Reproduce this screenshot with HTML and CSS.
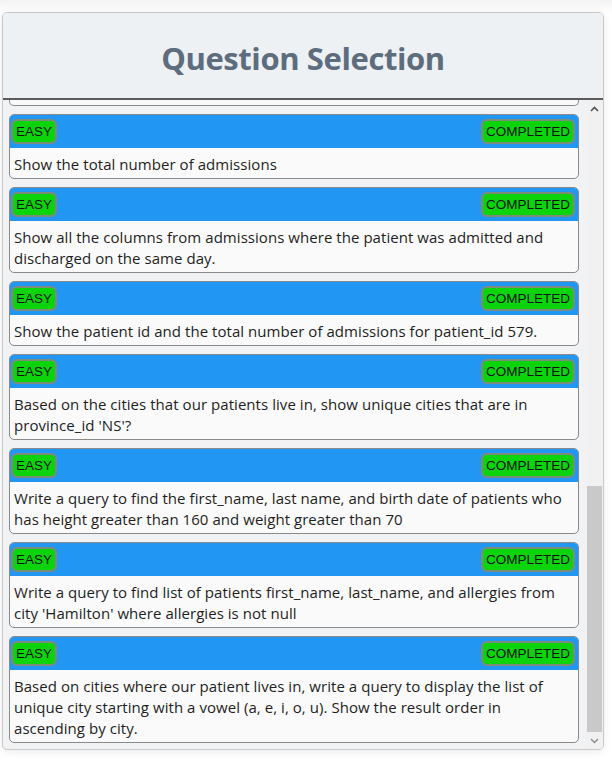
FILE: index.html
```html
<!DOCTYPE html>
<html>
<head>
<meta charset="utf-8">
<link rel="stylesheet" href="styles.css">
</head>
<body>
<div class="panel">
  <div class="panel-head"><h1 class="title">Question Selection</h1></div>
  <div class="panel-body">
    <div class="list">
      <div class="stub"></div>
      <div class="card">
        <div class="card-head"><span class="badge">EASY</span><span class="badge">COMPLETED</span></div>
        <div class="card-text">Show the total number of admissions</div>
      </div>
      <div class="card">
        <div class="card-head"><span class="badge">EASY</span><span class="badge">COMPLETED</span></div>
        <div class="card-text">Show all the columns from admissions where the patient was admitted and discharged on the same day.</div>
      </div>
      <div class="card">
        <div class="card-head"><span class="badge">EASY</span><span class="badge">COMPLETED</span></div>
        <div class="card-text">Show the patient id and the total number of admissions for patient_id 579.</div>
      </div>
      <div class="card">
        <div class="card-head"><span class="badge">EASY</span><span class="badge">COMPLETED</span></div>
        <div class="card-text">Based on the cities that our patients live in, show unique cities that are in province_id 'NS'?</div>
      </div>
      <div class="card">
        <div class="card-head"><span class="badge">EASY</span><span class="badge">COMPLETED</span></div>
        <div class="card-text">Write a query to find the first_name, last name, and birth date of patients who has height greater than 160 and weight greater than 70</div>
      </div>
      <div class="card">
        <div class="card-head"><span class="badge">EASY</span><span class="badge">COMPLETED</span></div>
        <div class="card-text">Write a query to find list of patients first_name, last_name, and allergies from city 'Hamilton' where allergies is not null</div>
      </div>
      <div class="card">
        <div class="card-head"><span class="badge">EASY</span><span class="badge">COMPLETED</span></div>
        <div class="card-text">Based on cities where our patient lives in, write a query to display the list of unique city starting with a vowel (a, e, i, o, u). Show the result order in ascending by city.</div>
      </div>
    </div>
    <div class="scrollbar">
      <div class="sb-btn">
        <svg width="9" height="6" viewBox="0 0 9 6"><polyline points="1,5 4.5,1.5 8,5" fill="none" stroke="#505050" stroke-width="1.6"/></svg>
      </div>
      <div class="sb-track"><div class="sb-thumb"></div></div>
      <div class="sb-btn">
        <svg width="9" height="6" viewBox="0 0 9 6"><polyline points="1,1 4.5,4.5 8,1" fill="none" stroke="#8a8a8a" stroke-width="1.4"/></svg>
      </div>
    </div>
  </div>
</div>
</body>
</html>
```

FILE: styles.css
```css
html, body {
  margin: 0;
  padding: 0;
  background: #ffffff;
}
body {
  background: linear-gradient(#f3f3f3 0px, #ffffff 14px);
  height: 760px;
  overflow: hidden;
}
.panel {
  margin: 12px 0 0 2px;
  width: 600px;
  height: 736px;
  border: 1px solid #c9c9c9;
  border-radius: 5px;
  display: flex;
  flex-direction: column;
  overflow: hidden;
  background: #f0f2f4;
  box-shadow: 0 2px 8px rgba(0, 0, 0, 0.08);
}
.panel-head {
  height: 85px;
  flex: none;
  background: #eef1f4;
  border-bottom: 2px solid #5b5b5b;
  display: flex;
  align-items: center;
  justify-content: center;
}
.title {
  margin: 4px 0 0 0;
  font-family: "Open Sans", sans-serif;
  font-weight: 700;
  font-size: 31px;
  letter-spacing: -0.4px;
  color: #5d6d7d;
}
.panel-body {
  flex: 1;
  min-height: 0;
  display: flex;
}
.list {
  flex: 1;
  min-width: 0;
  overflow: hidden;
  padding: 0 7px 0 6px;
  display: flex;
  flex-direction: column;
  gap: 8px;
}
.stub {
  flex: none;
  height: 5px;
  border: 1px solid #8a8a8a;
  border-top: none;
  border-radius: 0 0 5px 5px;
  background: #fafafa;
}
.card {
  flex: none;
  border: 1px solid #8a8a8a;
  border-radius: 5px;
  overflow: hidden;
  background: #fafafa;
}
.card-head {
  height: 33px;
  background: #2196f3;
  display: flex;
  align-items: center;
  justify-content: space-between;
  padding: 0 3px 0 1px;
}
.badge {
  font-family: "Liberation Sans", Arial, sans-serif;
  font-size: 13.5px;
  line-height: 16px;
  color: #111;
  background: #0cd40c;
  border: 2px solid #7d8b7d;
  border-radius: 6px;
  padding: 3px 3px 2px;
}
.card-text {
  padding: 6px 4px 3px 4px;
  font-family: "Open Sans", sans-serif;
  font-size: 15px;
  letter-spacing: 0.05px;
  line-height: 21px;
  color: #1e1e1e;
}
.scrollbar {
  flex: none;
  width: 17px;
  display: flex;
  flex-direction: column;
  background: #f1f1f1;
}
.sb-btn {
  height: 17px;
  flex: none;
  display: flex;
  align-items: center;
  justify-content: center;
}
.sb-track {
  flex: 1;
  display: flex;
  flex-direction: column;
  justify-content: flex-end;
}
.sb-thumb {
  height: 246px;
  margin: 0 1px 0 1px;
  background: #c9c9c9;
}
```
